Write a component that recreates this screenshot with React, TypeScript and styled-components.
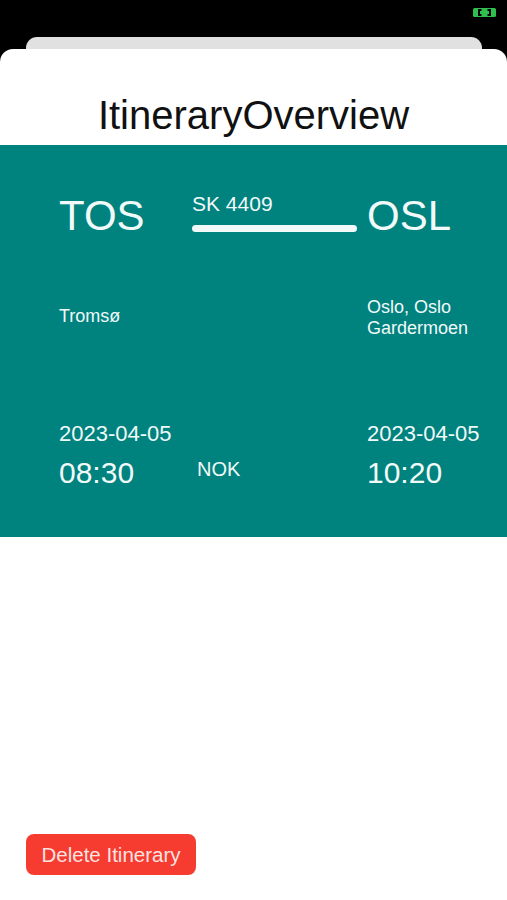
import React from "react";
import styled, { createGlobalStyle } from "styled-components";

const Global = createGlobalStyle`
  html, body { margin: 0; padding: 0; background: #000; }
  body { font-family: "Liberation Sans", Arial, sans-serif; }
`;

const Screen = styled.div`
  width: 507px;
  height: 900px;
  background: #000;
  display: flex;
  flex-direction: column;
  overflow: hidden;
`;

const StatusBar = styled.div`
  height: 37px;
  display: flex;
  justify-content: flex-end;
  align-items: flex-start;
  padding: 8px 11px 0 0;
  box-sizing: border-box;
`;

const BackCard = styled.div`
  margin: 0 25px 0 26px;
  height: 12px;
  background: #e1e1e1;
  border-radius: 11px 11px 0 0;
`;

const Sheet = styled.div`
  flex: 1;
  background: #fff;
  border-radius: 13px 13px 0 0;
  display: flex;
  flex-direction: column;
`;

const Title = styled.h1`
  margin: 42px 0 6px;
  height: 48px;
  font-weight: 400;
  font-size: 40px;
  line-height: 48px;
  color: #111;
  text-align: center;
`;

const Panel = styled.div`
  background: #00827f;
  height: 392px;
  box-sizing: border-box;
  padding: 48px 0 0 59px;
  display: flex;
  flex-direction: column;
  color: #f1faf9;
`;

const Row = styled.div<{ $top: number }>`
  display: grid;
  grid-template-columns: 133px 175px 1fr;
  align-items: start;
  margin-top: ${(p) => p.$top}px;
`;

const Code = styled.div`
  font-size: 42px;
  line-height: 42px;
  margin-top: 2px;
`;

const Flight = styled.div`
  display: flex;
  flex-direction: column;
`;

const FlightNo = styled.span`
  font-size: 21px;
  line-height: 21px;
`;

const Route = styled.div`
  margin-top: 11px;
  width: 165px;
  height: 7px;
  border-radius: 4px;
  background: #f1faf9;
`;

const City = styled.div<{ $offset: number }>`
  font-size: 18px;
  line-height: 21px;
  margin-top: ${(p) => p.$offset}px;
`;

const TimeCell = styled.div`
  display: flex;
  flex-direction: column;
`;

const DateText = styled.span`
  font-size: 22px;
  line-height: 26px;
`;

const TimeText = styled.span`
  font-size: 30px;
  line-height: 34px;
  margin-top: 9px;
`;

const Currency = styled.div`
  font-size: 20px;
  line-height: 24px;
  margin-top: 36px;
  padding-left: 5px;
`;

const Spacer = styled.div`
  flex: 1;
`;

const Footer = styled.div`
  padding: 0 0 25px 26px;
  display: flex;
`;

const DeleteButton = styled.button`
  width: 170px;
  height: 41px;
  border: none;
  border-radius: 8px;
  background: #f63b30;
  color: #fbe3e1;
  font-family: "Liberation Sans", Arial, sans-serif;
  font-size: 20.5px;
  padding: 0;
`;

const RecordIcon = () => (
  <svg width="23" height="9" viewBox="0 0 23 9">
    <rect x="0" y="0" width="23" height="9" rx="1.5" fill="#2fbf4f" />
    <path d="M8.5 2 L6 2 L6 7 L8.5 7" stroke="#000" strokeWidth="2" fill="none" />
    <path d="M14.5 2 L17 2 L17 7 L14.5 7" stroke="#000" strokeWidth="2" fill="none" />
  </svg>
);

export default function App() {
  return (
    <Screen>
      <Global />
      <StatusBar>
        <RecordIcon />
      </StatusBar>
      <BackCard />
      <Sheet>
        <Title>ItineraryOverview</Title>
        <Panel>
          <Row $top={0}>
            <Code>TOS</Code>
            <Flight>
              <FlightNo>SK 4409</FlightNo>
              <Route />
            </Flight>
            <Code>OSL</Code>
          </Row>
          <Row $top={60}>
            <City $offset={9}>Tromsø</City>
            <div />
            <City $offset={0}>
              Oslo, Oslo
              <br />
              Gardermoen
            </City>
          </Row>
          <Row $top={82}>
            <TimeCell>
              <DateText>2023-04-05</DateText>
              <TimeText>08:30</TimeText>
            </TimeCell>
            <Currency>NOK</Currency>
            <TimeCell>
              <DateText>2023-04-05</DateText>
              <TimeText>10:20</TimeText>
            </TimeCell>
          </Row>
        </Panel>
        <Spacer />
        <Footer>
          <DeleteButton>Delete Itinerary</DeleteButton>
        </Footer>
      </Sheet>
    </Screen>
  );
}
